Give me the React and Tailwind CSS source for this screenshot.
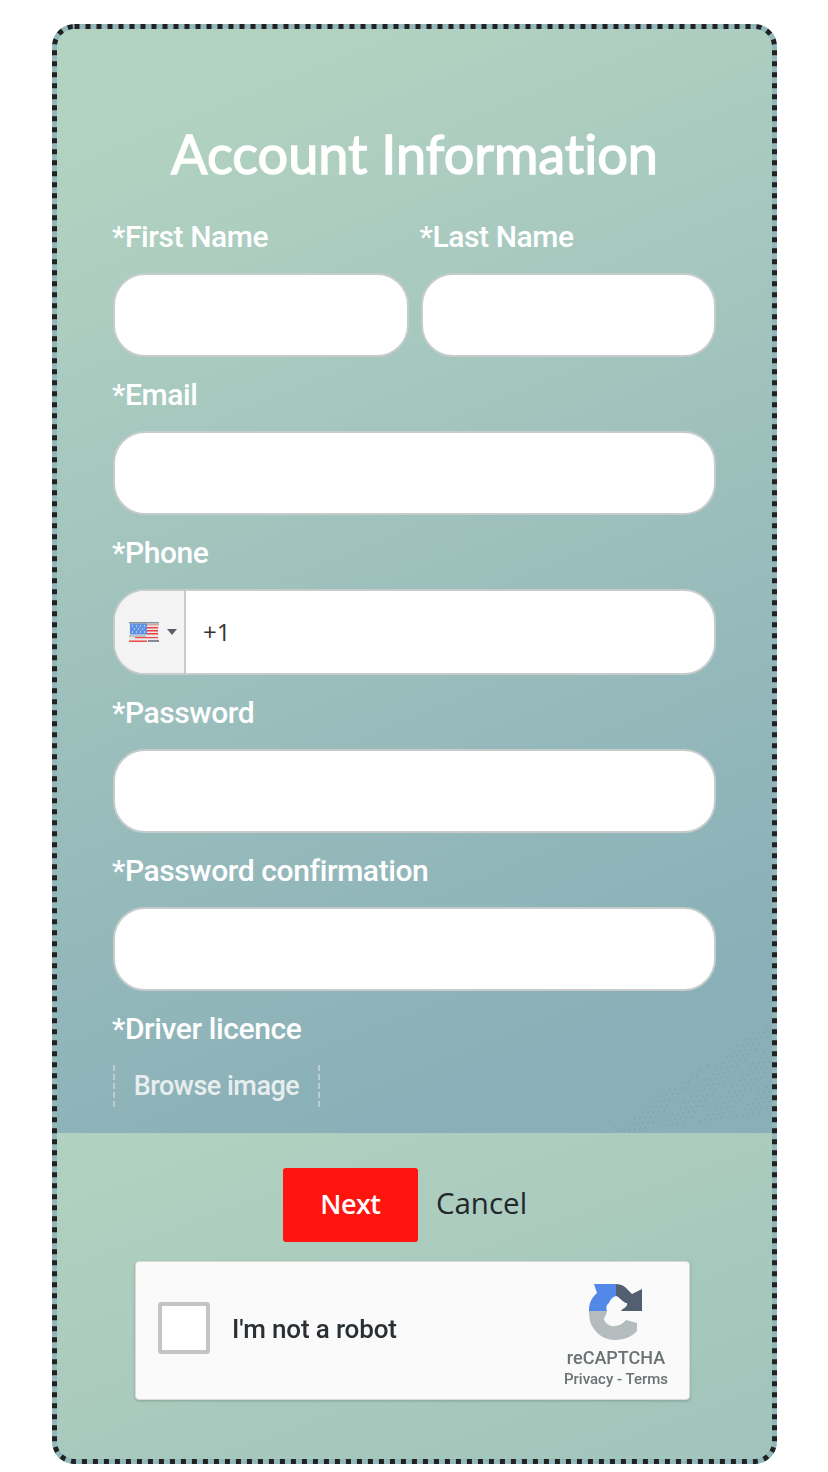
import { useMemo } from 'react'

const labelClass = "block -ml-[1px] pt-[19px] pb-[17px] h-[74px] text-[30px] leading-[38px] font-medium text-white tracking-[-0.4px] font-['Roboto',sans-serif]"
const inputClass = "block w-full h-[84px] bg-white border-2 border-[#c6cccb] rounded-[32px] outline-none"

function Field({ label, className }) {
  return (
    <div className={className}>
      <label className={labelClass}>{label}</label>
      <input className={inputClass} />
    </div>
  )
}

function FlagIcon() {
  return (
    <svg width="30" height="20" viewBox="0 0 30 20" className="shrink-0">
      <rect width="30" height="20" fill="#e9e9e7" />
      <rect y="0" width="30" height="1.5" fill="#8d9296" />
      <rect x="18" y="2" width="12" height="1.5" fill="#d9a3a0" />
      <rect x="18" y="5" width="11" height="1.5" fill="#f04040" />
      <rect x="18" y="8" width="11" height="1.5" fill="#f03c3c" />
      <rect x="18" y="11" width="11" height="1.5" fill="#f03c3c" />
      <rect x="6" y="15" width="23" height="1.2" fill="#ee4a4a" />
      <rect y="18.5" width="18" height="1.5" fill="#ee4a4a" />
      <rect x="19" y="18" width="11" height="2" fill="#858a8c" />
      <rect x="1" y="1.5" width="17" height="11" fill="#5f92e6" />
      <path d="M3 4h1M7 4h1M11 4h1M15 4h1M5 7h1M9 7h1M13 7h1M3 10h1M7 10h1M11 10h1M15 10h1" stroke="#c6d6ee" strokeWidth="1.4" />
      <rect x="0" y="13.5" width="17" height="1" fill="#9a9fa2" />
    </svg>
  )
}

function RecaptchaLogo() {
  return (
    <svg width="60" height="60" viewBox="0 0 60 60" className="shrink-0 translate-x-[1px]">
      <path d="M2 29C2 22 4 16 10 11L7 2H29V14C25 15 23 18 22 21C19 23 19 26 20 29Z" fill="#5288e8" />
      <path d="M29 2C34 2 38 4 41 8L45 12L55 7V29H34C36 26 41 25 40 21C37 22 33 15 29 14Z" fill="#525f70" />
      <path d="M2 29C2 35 3 42 7 47C12 54 19 58 28 58C37 58 46 54 50 49V41L39 38C35 43 29 45 24 44C20 42 17 40 17 36C19 34 19 32 20 29Z" fill="#b4bcbd" />
    </svg>
  )
}

function CornerDots() {
  const dots = useMemo(() => {
    const out = []
    for (let row = 0; row < 22; row++) {
      for (let col = 0; col < 32; col++) {
        const x = col * 5.4 + (row % 2) * 2.7
        const y = 112 - row * 5 - col * 0.7
        const limit = 112 - (x * 110) / 165
        if (y < limit - 2 || y > 112) continue
        const seed = (row * 37 + col * 61) % 7
        if (seed === 3 || seed === 5) continue
        const blue = x > 60 && y > 50 && (row * 13 + col * 7) % 5 === 0
        out.push({ x, y, fill: blue ? '#6c96c8' : '#83989f', key: `${row}-${col}` })
      }
    }
    return out
  }, [])
  return (
    <svg width="165" height="113" viewBox="0 0 165 113" className="absolute right-[5px] bottom-0">
      {dots.map((d) => (
        <rect key={d.key} x={d.x} y={d.y} width="1.2" height="1.2" fill={d.fill} />
      ))}
    </svg>
  )
}

export default function App() {
  return (
    <div className="w-[828px] h-[1472px] bg-white pt-[24px] pl-[52px]">
      <div className="relative w-[725px] h-[1440px] rounded-[22px] overflow-hidden flex flex-col">
        <section className="relative h-[1109px] pl-[61px] pr-[61px] bg-[linear-gradient(158deg,#b3d3c1_8%,#89afb8_88%)]">
          <h1 className="pt-[94px] h-[175px] text-center text-[54px] leading-[72px] text-white [-webkit-text-stroke:1.4px_white] [font-variant-ligatures:none] font-['Lato',sans-serif]">
            Account Information
          </h1>
          <div className="flex gap-[12px]">
            <Field label="*First Name" className="flex-1" />
            <Field label="*Last Name" className="flex-1" />
          </div>
          <Field label="*Email" />
          <div>
            <label className={labelClass}>*Phone</label>
            <div className="flex h-[86px] bg-white border-2 border-[#c6cccb] rounded-[32px] overflow-hidden">
              <div className="w-[71px] flex items-center pl-[14px] gap-[8px] bg-[#f3f3f3] border-r-2 border-[#c6cccb]">
                <FlagIcon />
                <span className="w-0 h-0 border-x-[5px] border-x-transparent border-t-[6px] border-t-[#5a6068]" />
              </div>
              <span className="pl-[17px] flex items-center text-[24px] text-[#333] font-['Open_Sans',sans-serif]">+1</span>
            </div>
          </div>
          <Field label="*Password" />
          <Field label="*Password confirmation" />
          <label className={labelClass}>*Driver licence</label>
          <div className="w-[207px] h-[42px] flex items-center justify-center border-x-2 border-dashed border-[#b9cdcf] text-[27px] font-medium tracking-[-0.5px] text-[#e8eeee] font-['Roboto',sans-serif]">
            Browse image
          </div>
          <CornerDots />
        </section>

        <div className="flex-1 bg-[linear-gradient(160deg,#b2d1c0,#a0c4bb)]">
          <div className="flex justify-center items-center gap-[18px] mt-[35px] pr-[19px]">
            <button className="w-[135px] h-[74px] pb-[2px] bg-[#ff140f] rounded-[3px] text-white text-[27px] font-semibold tracking-[-0.5px] font-['Open_Sans',sans-serif]">
              Next
            </button>
            <a className="text-[29.5px] text-[#22272b] -translate-y-[2px] font-['Open_Sans',sans-serif]">Cancel</a>
          </div>

          <div className="ml-[83px] mt-[19px] w-[555px] h-[139px] flex bg-[#fafafa] border border-[#dadada] rounded-[4px] shadow-[0_1px_3px_rgba(0,0,0,0.2)]">
            <span className="ml-[22px] mt-[40px] w-[52px] h-[52px] bg-white border-4 border-[#c1c5c5] rounded-[3px]" />
            <span className="ml-[22px] mt-[49px] h-[36px] leading-[36px] text-[26px] font-medium tracking-[-0.15px] text-[#2a2f33] font-['Roboto',sans-serif] blur-[0.4px]">I'm not a robot</span>
            <div className="ml-auto mr-[20px] w-[106px] pt-[20px] flex flex-col items-center text-[#6b7274] font-['Roboto',sans-serif] blur-[0.4px]">
              <RecaptchaLogo />
              <span className="mt-[4px] text-[18px] leading-[24px] font-medium">reCAPTCHA</span>
              <span className="text-[15px] leading-[18px] font-medium whitespace-nowrap">Privacy - Terms</span>
            </div>
          </div>
        </div>

        <svg width="725" height="1440" viewBox="0 0 725 1440" fill="none" className="absolute inset-0 pointer-events-none">
          <rect x="2.5" y="2.5" width="720" height="1435" rx="20" stroke="#93b8bb" strokeWidth="5" />
          <rect x="2.5" y="2.5" width="720" height="1435" rx="20" stroke="#222222" strokeWidth="5" strokeDasharray="5 6" />
        </svg>
      </div>
    </div>
  )
}
